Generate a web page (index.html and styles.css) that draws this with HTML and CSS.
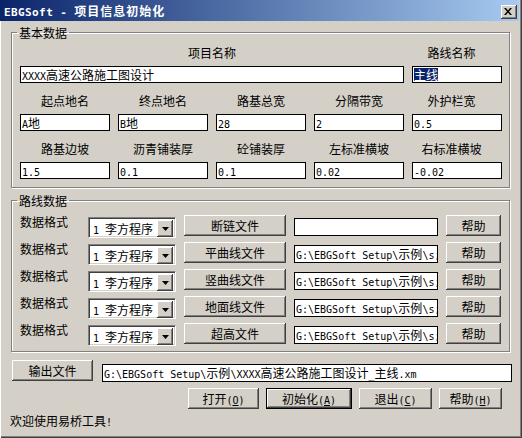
FILE: index.html
```html
<!DOCTYPE html>
<html>
<head>
<meta charset="utf-8">
<link rel="stylesheet" href="styles.css">
</head>
<body>
<div class="window">
  <div class="titlebar">
    <span class="title"><span class="tm">EBGSoft - </span>项目信息初始化</span>
    <span class="close"><svg width="16" height="14" viewBox="0 0 16 14"><path d="M3 3h2l2 2.5 2-2.5h2l-3 3.5 3 3.5h-2l-2-2.5-2 2.5h-2l3-3.5z" fill="#000"/></svg></span>
  </div>

  <fieldset class="group g1">
    <legend>基本数据</legend>
    <div class="grid">
      <div class="cell span4"><div class="lbl">项目名称</div><div class="field"><span class="m">XXXX</span>高速公路施工图设计</div></div>
      <div class="cell"><div class="lbl r">路线名称</div><div class="field"><span class="sel">主线</span></div></div>

      <div class="cell"><div class="lbl">起点地名</div><div class="field"><span class="m">A</span>地</div></div>
      <div class="cell"><div class="lbl">终点地名</div><div class="field"><span class="m">B</span>地</div></div>
      <div class="cell"><div class="lbl">路基总宽</div><div class="field"><span class="m">28</span></div></div>
      <div class="cell"><div class="lbl">分隔带宽</div><div class="field"><span class="m">2</span></div></div>
      <div class="cell"><div class="lbl r">外护栏宽</div><div class="field"><span class="m">0.5</span></div></div>

      <div class="cell"><div class="lbl">路基边坡</div><div class="field"><span class="m">1.5</span></div></div>
      <div class="cell"><div class="lbl">沥青铺装厚</div><div class="field"><span class="m">0.1</span></div></div>
      <div class="cell"><div class="lbl">砼铺装厚</div><div class="field"><span class="m">0.1</span></div></div>
      <div class="cell"><div class="lbl">左标准横坡</div><div class="field"><span class="m">0.02</span></div></div>
      <div class="cell"><div class="lbl r">右标准横坡</div><div class="field"><span class="m">-0.02</span></div></div>
    </div>
  </fieldset>

  <fieldset class="group g2">
    <legend>路线数据</legend>
    <div class="rows">
      <div class="row">
        <span class="rl">数据格式</span>
        <div class="combo"><span class="ct"><span class="m">1 </span>李方程序</span><span class="dd"><svg width="7" height="4" viewBox="0 0 7 4"><path d="M0 0h7L3.5 4z" fill="#000"/></svg></span></div>
        <button class="btn fb">断链文件</button>
        <div class="field pf"></div>
        <button class="btn hb">帮助</button>
      </div>
      <div class="row">
        <span class="rl">数据格式</span>
        <div class="combo"><span class="ct"><span class="m">1 </span>李方程序</span><span class="dd"><svg width="7" height="4" viewBox="0 0 7 4"><path d="M0 0h7L3.5 4z" fill="#000"/></svg></span></div>
        <button class="btn fb">平曲线文件</button>
        <div class="field pf"><span class="m">G:\EBGSoft Setup\</span>示例<span class="m">\s;</span></div>
        <button class="btn hb">帮助</button>
      </div>
      <div class="row">
        <span class="rl">数据格式</span>
        <div class="combo"><span class="ct"><span class="m">1 </span>李方程序</span><span class="dd"><svg width="7" height="4" viewBox="0 0 7 4"><path d="M0 0h7L3.5 4z" fill="#000"/></svg></span></div>
        <button class="btn fb">竖曲线文件</button>
        <div class="field pf"><span class="m">G:\EBGSoft Setup\</span>示例<span class="m">\s;</span></div>
        <button class="btn hb">帮助</button>
      </div>
      <div class="row">
        <span class="rl">数据格式</span>
        <div class="combo"><span class="ct"><span class="m">1 </span>李方程序</span><span class="dd"><svg width="7" height="4" viewBox="0 0 7 4"><path d="M0 0h7L3.5 4z" fill="#000"/></svg></span></div>
        <button class="btn fb">地面线文件</button>
        <div class="field pf"><span class="m">G:\EBGSoft Setup\</span>示例<span class="m">\s;</span></div>
        <button class="btn hb">帮助</button>
      </div>
      <div class="row">
        <span class="rl">数据格式</span>
        <div class="combo"><span class="ct"><span class="m">1 </span>李方程序</span><span class="dd"><svg width="7" height="4" viewBox="0 0 7 4"><path d="M0 0h7L3.5 4z" fill="#000"/></svg></span></div>
        <button class="btn fb">超高文件</button>
        <div class="field pf"><span class="m">G:\EBGSoft Setup\</span>示例<span class="m">\s;</span></div>
        <button class="btn hb">帮助</button>
      </div>
    </div>
  </fieldset>

  <div class="outrow">
    <button class="btn ob">输出文件</button>
    <div class="field of"><span class="m">G:\EBGSoft Setup\</span>示例<span class="m">\XXXX</span>高速公路施工图设计<span class="m">_</span>主线<span class="m">.xm</span></div>
  </div>

  <div class="actions">
    <button class="btn a1">打开<span class="m">(<u>O</u>)</span></button>
    <button class="btn a2 def">初始化<span class="m">(<u>A</u>)</span></button>
    <button class="btn a3">退出<span class="m">(<u>C</u>)</span></button>
    <button class="btn a4">帮助<span class="m">(<u>H</u>)</span></button>
  </div>

  <div class="status">欢迎使用易桥工具<span class="m">!</span></div>
</div>
</body>
</html>
```

FILE: styles.css
```css
* { box-sizing: border-box; }
html, body { margin: 0; padding: 0; }
body {
  width: 522px;
  height: 438px;
  overflow: hidden;
  background: #D4D0C8;
  font-family: "Noto Sans CJK SC", sans-serif;
  font-size: 12px;
  color: #000;
}
.window {
  width: 522px;
  height: 438px;
  display: flex;
  flex-direction: column;
  box-shadow: inset 1px 0 #ffffff, inset -1px -1px #404040, inset -2px -2px #808080;
}
.m {
  font-family: "DejaVu Sans Mono", monospace;
  font-size: 10px;
}

/* title bar */
.titlebar {
  height: 21px;
  margin-right: 3px;
  display: flex;
  justify-content: space-between;
  align-items: flex-start;
  background: linear-gradient(to right, #0A246A, #A6CAF0);
  color: #fff;
}
.title {
  font-weight: bold;
  line-height: 21px;
  padding-left: 4px;
  letter-spacing: 1px;
  white-space: nowrap;
}
.tm {
  font-family: "DejaVu Sans Mono", monospace;
  font-size: 11px;
  letter-spacing: 0.4px;
}
.close {
  width: 16px;
  height: 14px;
  margin: 5px 2px 0 0;
  background: #D4D0C8;
  box-shadow: inset -1px -1px #404040, inset 1px 1px #fff, inset -2px -2px #808080;
  display: flex;
}
.close svg { display: block; }

/* group boxes */
.group {
  min-width: 0;
  border: 1px solid #808080;
  box-shadow: inset 1px 1px #fff, 1px 1px #fff;
}
.group legend {
  padding: 0 2px;
  margin-left: -3px;
  line-height: 15px;
}
.g1 {
  margin: 4px 12px 0 11px;
  padding: 6px 7px 8px 8px;
}
.g2 {
  margin: 5px 12px 0 11px;
  padding: 7px 7px 5px 8px;
}

.grid {
  display: grid;
  grid-template-columns: repeat(5, 90px);
  column-gap: 8px;
  row-gap: 11px;
}
.cell {
  display: flex;
  flex-direction: column;
  gap: 6px;
}
.span4 { grid-column: span 4; }
.lbl {
  text-align: center;
  line-height: 14px;
  white-space: nowrap;
}
.lbl.r { padding-right: 11px; }

.field {
  background: #fff;
  border: 1px solid #000;
  height: 17px;
  line-height: 15px;
  padding-left: 1px;
  white-space: nowrap;
  overflow: hidden;
}
.sel {
  display: inline-block;
  background: #0A246A;
  color: #fff;
  line-height: 13px;
  margin-top: 1px;
  vertical-align: top;
}

/* route rows */
.rows {
  display: flex;
  flex-direction: column;
  gap: 4px;
}
.row {
  display: flex;
  align-items: flex-start;
  height: 23px;
}
.rl {
  width: 68px;
  line-height: 14px;
  white-space: nowrap;
}
.combo {
  width: 88px;
  height: 21px;
  margin-top: 2px;
  display: flex;
  justify-content: space-between;
  background: #fff;
  border: 1px solid;
  border-color: #808080 #fff #fff #808080;
  box-shadow: inset 1px 1px #404040, inset -1px -1px #D4D0C8;
  padding: 2px;
}
.ct {
  line-height: 17px;
  padding-left: 2px;
  white-space: nowrap;
}
.dd {
  width: 16px;
  height: 17px;
  background: #D4D0C8;
  box-shadow: inset -1px -1px #404040, inset 1px 1px #fff, inset -2px -2px #808080;
  display: flex;
  align-items: center;
  justify-content: center;
}
.dd svg { display: block; margin-top: 1px; }

.btn {
  font: inherit;
  font-size: 12px;
  margin: 0;
  padding: 0;
  border: 0;
  height: 21px;
  line-height: 21px;
  background: #D4D0C8;
  color: #000;
  text-align: center;
  white-space: nowrap;
  box-shadow: inset -1px -1px #404040, inset 1px 1px #fff, inset -2px -2px #808080;
}
.btn.def {
  border: 1px solid #000;
  line-height: 19px;
}
.fb { width: 102px; margin-left: 8px; }
.pf { width: 144px; height: 18px; line-height: 16px; margin: 3px 0 0 8px; }
.hb { width: 55px; margin-left: 8px; }

/* bottom */
.outrow {
  display: flex;
  align-items: flex-start;
  margin-top: 8px;
  padding-left: 12px;
}
.ob { width: 81px; }
.of { width: 410px; height: 18px; line-height: 16px; margin: 4px 0 0 9px; }

.actions {
  display: flex;
  justify-content: flex-end;
  gap: 7px;
  margin-top: 6px;
  padding-right: 20px;
}
.a1 { width: 71px; }
.a2 { width: 86px; }
.a3 { width: 73px; }
.a4 { width: 63px; }

.status {
  margin-top: 5px;
  padding-left: 10px;
  line-height: 14px;
}
```
